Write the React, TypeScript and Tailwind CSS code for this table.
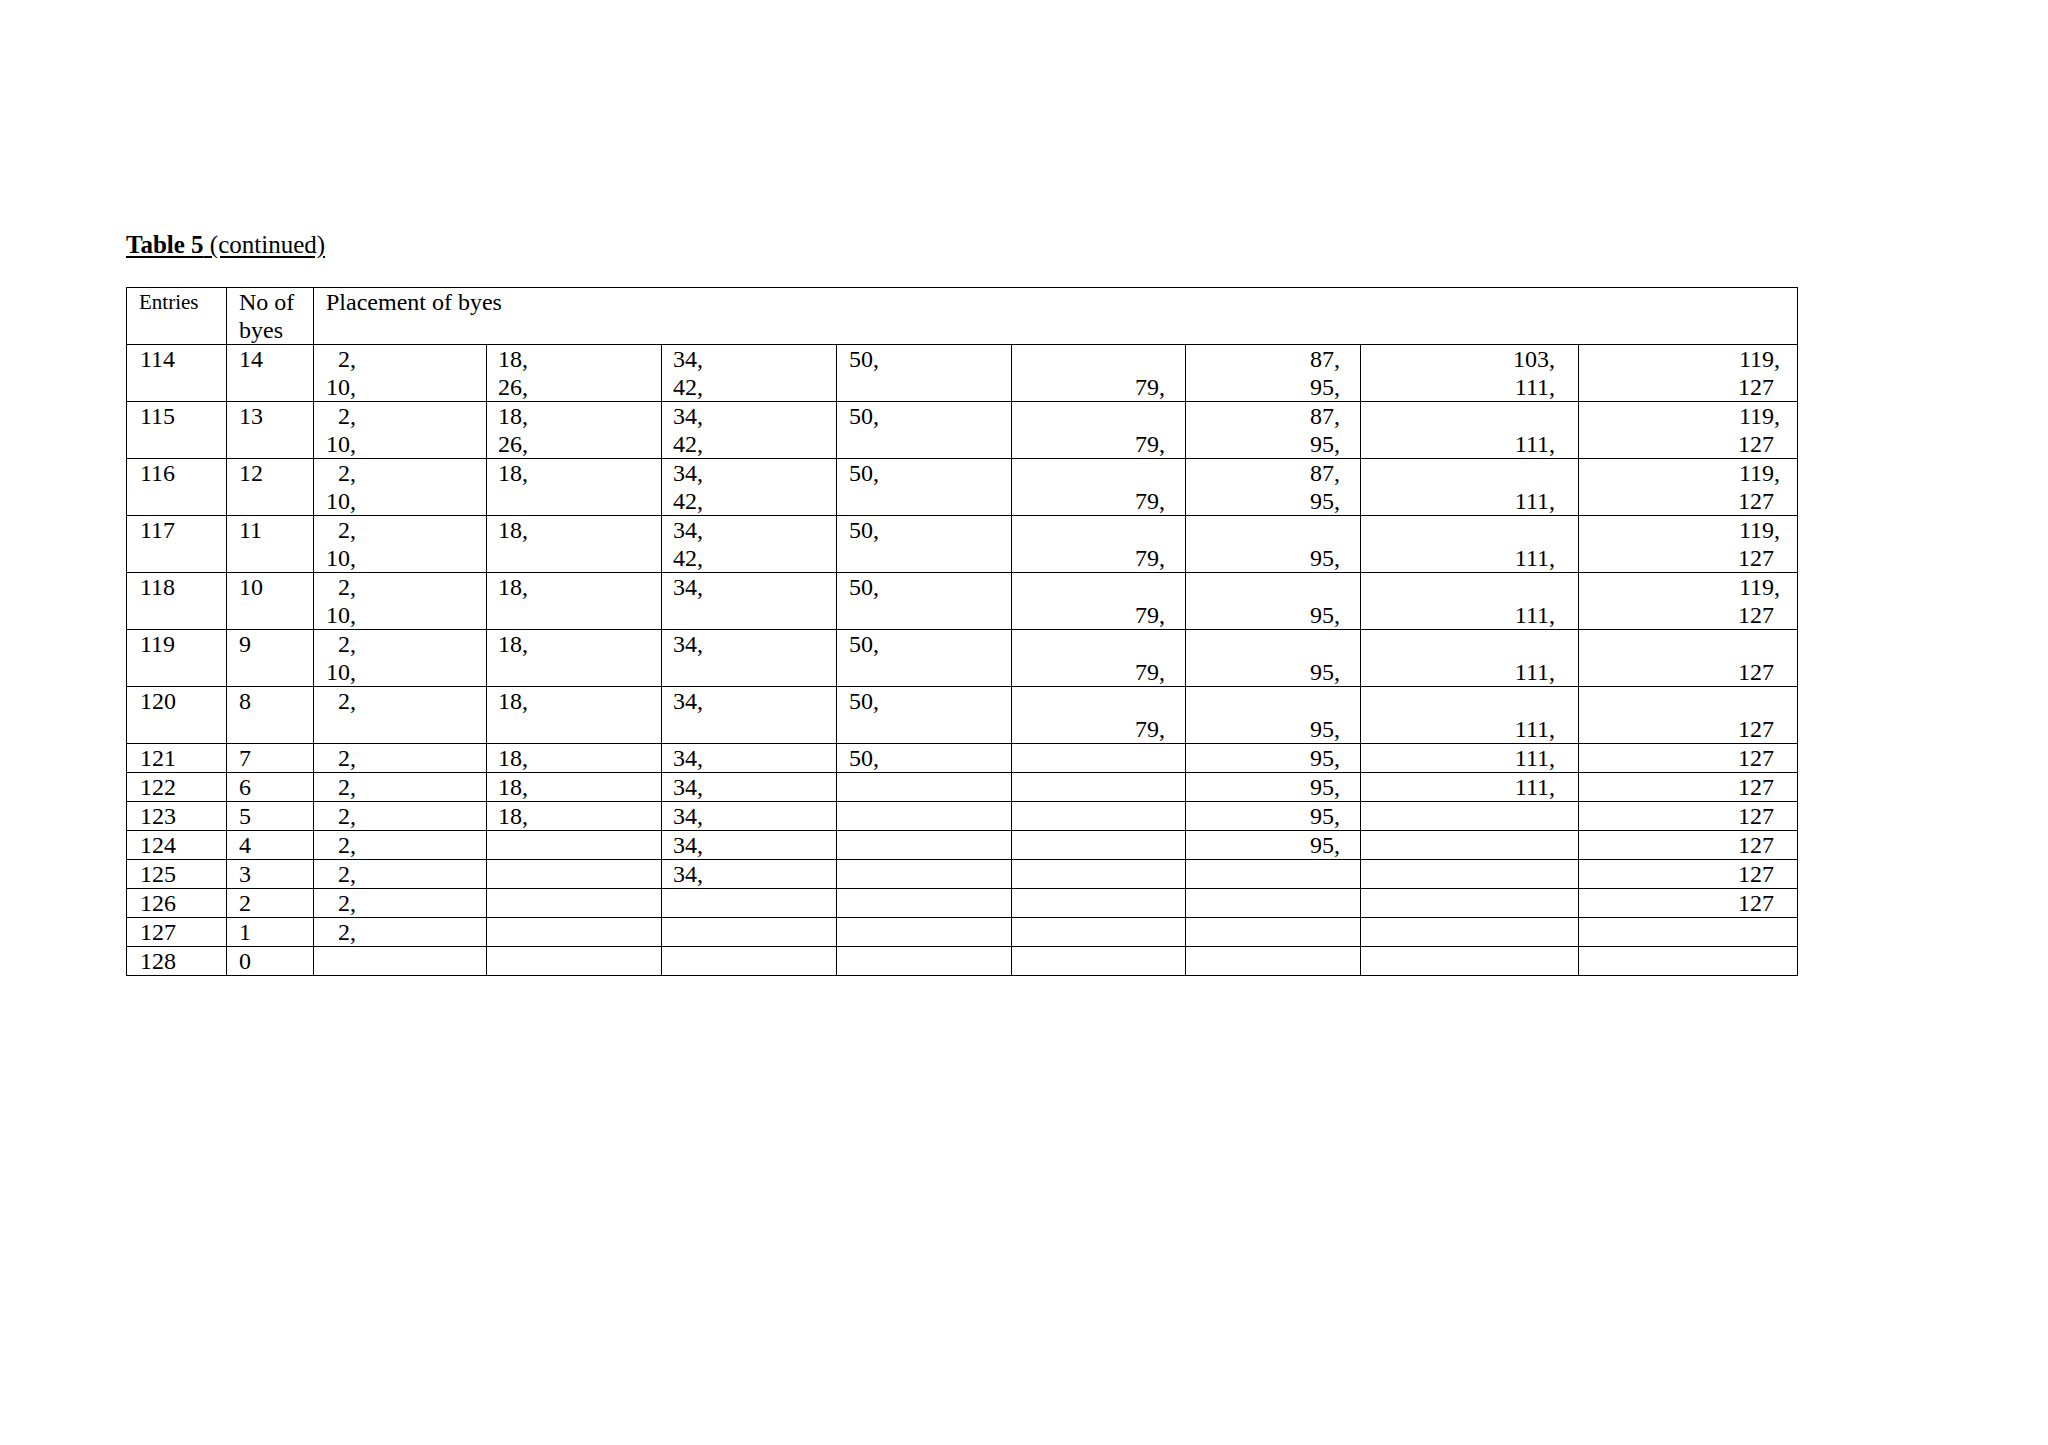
const SP = "\u00a0\u00a0"

interface Row {
  entries: string
  byes: string
  cells: string[][]
}

const rows: Row[] = [
  {
    entries: "114",
    byes: "14",
    cells: [[SP + "2,", "10,"], ["18,", "26,"], ["34,", "42,"], ["50,"], ["", "79,"], ["87,", "95,"], ["103,", "111,"], ["119,", "127\u00a0"]],
  },
  {
    entries: "115",
    byes: "13",
    cells: [[SP + "2,", "10,"], ["18,", "26,"], ["34,", "42,"], ["50,"], ["", "79,"], ["87,", "95,"], ["", "111,"], ["119,", "127\u00a0"]],
  },
  {
    entries: "116",
    byes: "12",
    cells: [[SP + "2,", "10,"], ["18,"], ["34,", "42,"], ["50,"], ["", "79,"], ["87,", "95,"], ["", "111,"], ["119,", "127\u00a0"]],
  },
  {
    entries: "117",
    byes: "11",
    cells: [[SP + "2,", "10,"], ["18,"], ["34,", "42,"], ["50,"], ["", "79,"], ["", "95,"], ["", "111,"], ["119,", "127\u00a0"]],
  },
  {
    entries: "118",
    byes: "10",
    cells: [[SP + "2,", "10,"], ["18,"], ["34,"], ["50,"], ["", "79,"], ["", "95,"], ["", "111,"], ["119,", "127\u00a0"]],
  },
  {
    entries: "119",
    byes: "9",
    cells: [[SP + "2,", "10,"], ["18,"], ["34,"], ["50,"], ["", "79,"], ["", "95,"], ["", "111,"], ["", "127\u00a0"]],
  },
  {
    entries: "120",
    byes: "8",
    cells: [[SP + "2,"], ["18,"], ["34,"], ["50,"], ["", "79,"], ["", "95,"], ["", "111,"], ["", "127\u00a0"]],
  },
  { entries: "121", byes: "7", cells: [[SP + "2,"], ["18,"], ["34,"], ["50,"], [], ["95,"], ["111,"], ["127\u00a0"]] },
  { entries: "122", byes: "6", cells: [[SP + "2,"], ["18,"], ["34,"], [], [], ["95,"], ["111,"], ["127\u00a0"]] },
  { entries: "123", byes: "5", cells: [[SP + "2,"], ["18,"], ["34,"], [], [], ["95,"], [], ["127\u00a0"]] },
  { entries: "124", byes: "4", cells: [[SP + "2,"], [], ["34,"], [], [], ["95,"], [], ["127\u00a0"]] },
  { entries: "125", byes: "3", cells: [[SP + "2,"], [], ["34,"], [], [], [], [], ["127\u00a0"]] },
  { entries: "126", byes: "2", cells: [[SP + "2,"], [], [], [], [], [], [], ["127\u00a0"]] },
  { entries: "127", byes: "1", cells: [[SP + "2,"], [], [], [], [], [], [], []] },
  { entries: "128", byes: "0", cells: [[], [], [], [], [], [], [], []] },
]

// placement columns: four flush left, four flush right
const cellClass = [
  "pl-[12px]",
  "pl-[11px]",
  "pl-[11px]",
  "pl-[12px]",
  "text-right pr-[20px]",
  "text-right pr-[20px]",
  "text-right pr-[23px]",
  "text-right pr-[17px]",
]

const colWidths = [100, 87, 173, 175, 175, 175, 174, 175, 218, 219]

function Lines({ lines }: { lines: string[] }) {
  if (lines.length === 0) return <>{"\u00a0"}</>
  return (
    <>
      {lines.map((line, i) => (
        <span key={i}>
          {i > 0 && <br />}
          {line || "\u00a0"}
        </span>
      ))}
    </>
  )
}

export default function App() {
  const td = "border border-black align-top p-0"

  return (
    <div
      className="min-h-[1445px] w-full bg-white text-black pt-[231px] pl-[126px]"
      style={{ fontFamily: '"Liberation Serif", "Times New Roman", serif' }}
    >
      <p className="text-[25px] leading-[28px] underline underline-offset-[3px]">
        <span className="font-bold">Table 5</span> (continued)
      </p>

      <table className="mt-[28px] border-collapse table-fixed text-[24px] leading-[28px]" style={{ width: 1671 }}>
        <colgroup>
          {colWidths.map((w, i) => (
            <col key={i} style={{ width: w }} />
          ))}
        </colgroup>
        <tbody>
          <tr>
            <td className={`${td} pl-[12px] text-[21px]`}>Entries</td>
            <td className={`${td} pl-[12px]`}>
              No of
              <br />
              byes
            </td>
            <td className={`${td} pl-[12px]`} colSpan={8}>
              Placement of byes
            </td>
          </tr>
          {rows.map((row) => (
            <tr key={row.entries}>
              <td className={`${td} pl-[13px]`}>{row.entries}</td>
              <td className={`${td} pl-[12px]`}>{row.byes}</td>
              {row.cells.map((lines, i) => (
                <td key={i} className={`${td} ${cellClass[i]}`}>
                  <Lines lines={lines} />
                </td>
              ))}
            </tr>
          ))}
        </tbody>
      </table>
    </div>
  )
}
